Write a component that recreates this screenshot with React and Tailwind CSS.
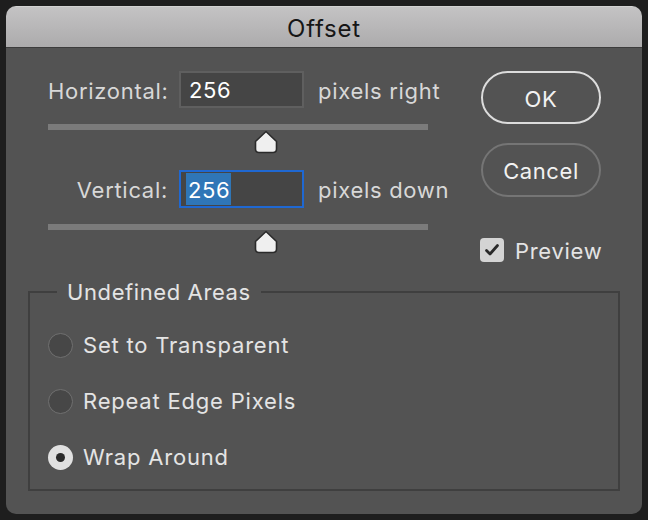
import React from "react";

const font = { fontFamily: "Inter, 'Liberation Sans', sans-serif" };

function Thumb({ left }) {
  return (
    <div className="h-[23px] relative">
      <svg width="26" height="24" viewBox="0 0 26 24" className="absolute top-0" style={{ left }}>
        <path
          d="M13 1.5 L23.5 11.5 V19 Q23.5 22.5 20 22.5 H6 Q2.5 22.5 2.5 19 V11.5 Z"
          fill="#efefef"
          stroke="#2a2a2a"
          strokeWidth="1.6"
          strokeLinejoin="round"
        />
      </svg>
    </div>
  );
}

function Radio({ label, checked }) {
  return (
    <div className="h-[56px] flex items-center">
      {checked ? (
        <div className="w-[25px] h-[25px] rounded-full bg-[#e1e1e1] flex items-center justify-center">
          <div className="w-[9px] h-[9px] rounded-full bg-[#2b2b2b]" />
        </div>
      ) : (
        <div className="w-[25px] h-[25px] rounded-full bg-[#474747] border border-[#707070]" />
      )}
      <span className="ml-[10px] text-[22px] tracking-[0.8px] text-[#e4e4e4] leading-none">{label}</span>
    </div>
  );
}

export default function App() {
  return (
    <div className="w-[648px] h-[520px] bg-[#1e1e1e] p-[6px]" style={font}>
      <div className="h-full rounded-[10px] overflow-hidden flex flex-col">
        {/* Title bar */}
        <div className="h-[42px] bg-gradient-to-b from-[#c4c3c4] to-[#acabac] border-t border-[#d2d2d2] border-b border-b-[#3c3c3c] flex items-center justify-center pt-[3px]">
          <span className="text-[24px] tracking-[0.8px] text-[#161616] leading-none">Offset</span>
        </div>

        {/* Body */}
        <div className="flex-1 bg-[#535353] pt-[23px]">
          <div className="flex">
            {/* Sliders */}
            <div className="w-[475px] pl-[42px]">
              <div className="flex items-center h-[37px]">
                <span className="w-[120px] text-right text-[22px] tracking-[0.7px] text-[#d8d8d8] leading-none pt-[2px]">Horizontal:</span>
                <div className="ml-[11px] w-[125px] h-[37px] bg-[#454545] border-2 border-[#5f5f5f] flex items-center pl-[8px]">
                  <span className="text-[22px] tracking-[0.6px] text-white leading-none pt-[1px]">256</span>
                </div>
                <span className="ml-[14px] text-[22px] tracking-[0.7px] text-[#d8d8d8] leading-none pt-[2px]">pixels right</span>
              </div>
              <div className="mt-[16px] h-[6px] w-[380px] bg-[#7b7b7b]" />
              <Thumb left={205} />

              <div className="mt-[17px] flex items-center h-[38px]">
                <span className="w-[120px] text-right text-[22px] tracking-[0.7px] text-[#d8d8d8] leading-none pt-[2px]">Vertical:</span>
                <div className="ml-[11px] w-[125px] h-[38px] bg-[#454545] border-2 border-[#1f68d2] flex items-center pl-[5px]">
                  <span className="text-[22px] tracking-[0.6px] text-white leading-none bg-[#2f76b7] h-[32px] flex items-center pl-[2px] pr-[1px] pt-[1px]">256</span>
                </div>
                <span className="ml-[14px] text-[22px] tracking-[0.7px] text-[#d8d8d8] leading-none pt-[2px]">pixels down</span>
              </div>
              <div className="mt-[16px] h-[6px] w-[380px] bg-[#7b7b7b]" />
              <Thumb left={205} />
            </div>

            {/* Buttons */}
            <div className="flex flex-col">
              <button className="w-[120px] h-[53px] rounded-full border-2 border-[#dcdcdc] text-[22px] tracking-[0.6px] text-[#f2f2f2] leading-none pt-[2px]">
                OK
              </button>
              <button className="mt-[19px] w-[120px] h-[54px] rounded-full border-2 border-[#757575] text-[22px] tracking-[0.6px] text-[#f2f2f2] leading-none pt-[2px]">
                Cancel
              </button>
              <div className="mt-[41px] flex items-center -ml-[1px]">
                <div className="w-[24px] h-[24px] rounded-[4px] bg-[#d4d4d4] flex items-center justify-center">
                  <svg width="16" height="16" viewBox="0 0 16 16">
                    <path d="M2.5 8.5 L6 12 L13.5 3.5" fill="none" stroke="#2a2a2a" strokeWidth="2.8" strokeLinecap="round" strokeLinejoin="round" />
                  </svg>
                </div>
                <span className="ml-[11px] text-[22px] tracking-[0.7px] text-[#e4e4e4] leading-none pt-[1px]">Preview</span>
              </div>
            </div>
          </div>

          {/* Undefined Areas */}
          <fieldset className="mx-[22px] mt-[17px] border-2 border-[#3f3f3f] px-[18px] pb-[4px]">
            <legend className="ml-[9px] px-[10px] text-[22px] tracking-[0.6px] leading-[26px] text-[#e4e4e4]">Undefined Areas</legend>
            <div className="mt-[12px]">
              <Radio label="Set to Transparent" />
              <Radio label="Repeat Edge Pixels" />
              <Radio label="Wrap Around" checked />
            </div>
          </fieldset>
        </div>
      </div>
    </div>
  );
}
